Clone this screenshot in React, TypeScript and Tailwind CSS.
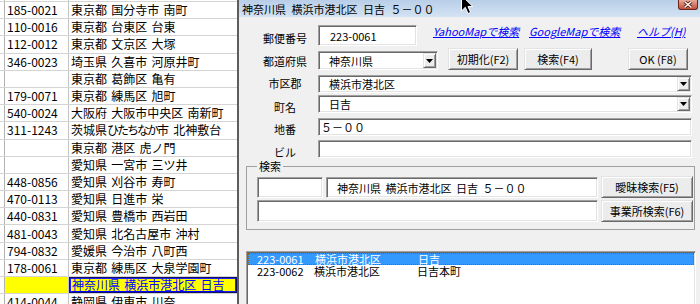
import React from "react";

const sunken =
  "bg-white border border-t-[#a0a0a0] border-l-[#a0a0a0] border-b-white border-r-white shadow-[inset_1px_1px_0_#696969,inset_-1px_-1px_0_#e3e3e3]";
const raised =
  "bg-[#ececec] border border-t-[#e3e3e3] border-l-[#e3e3e3] border-b-[#696969] border-r-[#696969] shadow-[inset_1px_1px_0_#ffffff,inset_-1px_-1px_0_#a0a0a0]";

type Row = { zip: string; addr: React.ReactNode; sel?: boolean };

const rows: Row[] = [
  { zip: "185-0021", addr: "東京都 国分寺市 南町" },
  { zip: "110-0016", addr: "東京都 台東区 台東" },
  { zip: "112-0012", addr: "東京都 文京区 大塚" },
  { zip: "346-0023", addr: "埼玉県 久喜市 河原井町" },
  { zip: "", addr: "東京都 葛飾区 亀有" },
  { zip: "179-0071", addr: "東京都 練馬区 旭町" },
  { zip: "540-0024", addr: "大阪府 大阪市中央区 南新町" },
  {
    zip: "311-1243",
    addr: (
      <>
        茨城県 <span className="tracking-[-2px]">ひたちなか</span>市 北神敷台
      </>
    ),
  },
  { zip: "", addr: "東京都 港区 虎ノ門" },
  { zip: "", addr: "愛知県 一宮市 三ツ井" },
  { zip: "448-0856", addr: "愛知県 刈谷市 寿町" },
  { zip: "470-0113", addr: "愛知県 日進市 栄" },
  { zip: "440-0831", addr: "愛知県 豊橋市 西岩田" },
  { zip: "481-0043", addr: "愛知県 北名古屋市 沖村" },
  { zip: "794-0832", addr: "愛媛県 今治市 八町西" },
  { zip: "178-0061", addr: "東京都 練馬区 大泉学園町" },
  { zip: "", addr: "神奈川県 横浜市港北区 日吉", sel: true },
  { zip: "414-0044", addr: "静岡県 伊東市 川奈" },
];

function Sheet() {
  return (
    <div className="w-[237px] h-[304px] shrink-0 overflow-hidden bg-white text-[12px] leading-[12px] [word-spacing:1.5px]">
      <div className="h-[2px] flex border-b border-[#d4d4d4]">
        <div className="w-[5px] shrink-0 border-r border-[#b4b4b4]" />
        <div className="w-[64px] shrink-0 border-r border-[#c4c4c4]" />
      </div>
      {rows.map((r, i) => (
        <div key={i} className="h-[17.2px] flex border-b border-[#d4d4d4]">
          <div className="w-[5px] shrink-0 border-r border-[#b4b4b4]" />
          {r.sel ? (
            <>
              <div className="w-[64px] shrink-0 border-r border-[#c4c4c4] bg-[#ffff00]" />
              <div className="flex-1 flex items-center pl-[3px] whitespace-nowrap bg-[#ffff00] text-[#0000ff] underline shadow-[inset_0_0_0_1px_#10106a,inset_0_0_0_2px_#2222ee]">
                {r.addr}
              </div>
            </>
          ) : (
            <>
              <div className="w-[64px] shrink-0 border-r border-[#c4c4c4] flex items-center pl-[2px] whitespace-nowrap">
                {r.zip}
              </div>
              <div className="flex-1 flex items-center pl-[2px] whitespace-nowrap">{r.addr}</div>
            </>
          )}
        </div>
      ))}
    </div>
  );
}

function Arrow() {
  return (
    <svg width="7" height="4" viewBox="0 0 7 4">
      <polygon points="0,0 7,0 3.5,4" fill="#000" />
    </svg>
  );
}

function Label({ children, cls }: { children: React.ReactNode; cls: string }) {
  return <div className={"w-[50px] ml-[21px] mr-[8px] shrink-0 text-center whitespace-nowrap " + cls}>{children}</div>;
}

function Btn({ children, cls }: { children: React.ReactNode; cls: string }) {
  return (
    <div className={raised + " shrink-0 flex items-center justify-center whitespace-nowrap text-[11px] " + cls}>
      {children}
    </div>
  );
}

function Combo({ text, cls }: { text: string; cls: string }) {
  return (
    <div className={sunken + " shrink-0 flex items-stretch p-[1px] " + cls}>
      <div className="flex-1 flex items-center pl-[9px] whitespace-nowrap">{text}</div>
      <div className={raised + " w-[13px] flex items-center justify-center"}>
        <Arrow />
      </div>
    </div>
  );
}

function Field({ text, cls }: { text: string; cls: string }) {
  return <div className={sunken + " shrink-0 flex items-center whitespace-nowrap " + cls}>{text}</div>;
}

function CloseBtn() {
  return (
    <div className="absolute right-[2px] top-0 w-[20px] h-[10px] rounded-b-[3px] border border-t-0 border-[#6b2318] bg-linear-to-b from-[#e9a898] to-[#c24e38] flex items-center justify-center">
      <svg width="10" height="7" viewBox="0 0 10 7">
        <path d="M1.5 0.5 L8.5 6.5 M8.5 0.5 L1.5 6.5" stroke="#5a1a10" strokeWidth="3" />
        <path d="M1.5 0.5 L8.5 6.5 M8.5 0.5 L1.5 6.5" stroke="#ffffff" strokeWidth="1.4" />
      </svg>
    </div>
  );
}

function Dialog() {
  return (
    <div className="flex-1 h-[304px] flex flex-col bg-[#f0f0f0] border-l-2 border-[#5d5d5d] text-[11px] leading-[12px] text-black">
      <div className="relative h-[17px] shrink-0 flex items-center pl-[3px] bg-linear-to-b from-[#b8cee8] to-[#d4e3f3] whitespace-nowrap [word-spacing:3px]">
        神奈川県 横浜市港北区 日吉 ５－００
        <CloseBtn />
      </div>
      <div className="flex flex-col pt-[8px]">
        {/* 郵便番号 */}
        <div className="flex items-start h-[21px]">
          <Label cls="mt-[7px]">郵便番号</Label>
          <Field text="223-0061" cls="w-[99px] h-[21px] pl-[11px]" />
          <div className="flex ml-[16px] text-[#0000ff] italic underline whitespace-nowrap">
            <div className="w-[96px]">YahooMapで検索</div>
            <div className="w-[108px]">GoogleMapで検索</div>
            <div>ヘルプ(H)</div>
          </div>
        </div>
        {/* 都道府県 */}
        <div className="flex items-start h-[22px] mt-[2px]">
          <Label cls="mt-[7px]">都道府県</Label>
          <Combo text="神奈川県" cls="w-[120px] h-[19px] mt-[3px]" />
          <Btn cls="ml-[10px] w-[70px] h-[22px]">初期化(F2)</Btn>
          <Btn cls="ml-[6px] w-[68px] h-[22px]">検索(F4)</Btn>
          <Btn cls="ml-[36px] w-[60px] h-[22px]">OK (F8)</Btn>
        </div>
        {/* 市区郡 */}
        <div className="flex items-start h-[18px] mt-[5px]">
          <Label cls="mt-[2px]">市区郡</Label>
          <Combo text="横浜市港北区" cls="w-[374px] h-[18px]" />
        </div>
        {/* 町名 */}
        <div className="flex items-start h-[18px] mt-[2px]">
          <Label cls="mt-[6px]">町名</Label>
          <Combo text="日吉" cls="w-[374px] h-[18px]" />
        </div>
        {/* 地番 */}
        <div className="flex items-start h-[18px] mt-[5px]">
          <Label cls="mt-[5px]">地番</Label>
          <Field text="５－００" cls="w-[374px] h-[18px] pl-[2px]" />
        </div>
        {/* ビル */}
        <div className="flex items-start h-[18px] mt-[4px]">
          <Label cls="mt-[6px]">ビル</Label>
          <Field text="" cls="w-[374px] h-[18px]" />
        </div>
        {/* 検索 group */}
        <fieldset className="ml-[7px] mt-[2px] w-[449px] border border-[#a0a0a0] pl-[10px] pt-[4px] pb-[7px]">
          <legend className="px-[2px] leading-[12px]">検索</legend>
          <div className="flex items-start h-[22px]">
            <Field text="" cls="w-[66px] h-[21px] mt-[1px]" />
            <Field text="神奈川県 横浜市港北区 日吉 ５－００" cls="ml-[3px] w-[272px] h-[21px] mt-[1px] pl-[10px] [word-spacing:2px]" />
            <Btn cls="ml-[3px] w-[92px] h-[22px]">曖昧検索(F5)</Btn>
          </div>
          <div className="flex items-start h-[22px] mt-[2px]">
            <Field text="" cls="w-[341px] h-[22px]" />
            <Btn cls="ml-[3px] w-[92px] h-[22px]">事業所検索(F6)</Btn>
          </div>
        </fieldset>
        {/* list */}
        <div className={sunken + " ml-[7px] mt-[21px] w-[450px] h-[60px] p-[1px] whitespace-nowrap"}>
          <div className="h-[12px] flex items-center bg-[#3399ff] text-white border border-dotted border-[#9a6010]">
            <div className="w-[66px] pl-[8px]">223-0061</div>
            <div className="w-[103px]">横浜市港北区</div>
            <div>日吉</div>
          </div>
          <div className="h-[12px] flex items-center">
            <div className="w-[66px] pl-[9px]">223-0062</div>
            <div className="w-[103px]">横浜市港北区</div>
            <div>日吉本町</div>
          </div>
        </div>
      </div>
    </div>
  );
}

function Cursor() {
  return (
    <svg className="absolute left-[461px] top-[-5px]" width="13" height="20" viewBox="0 0 13 20">
      <path d="M0.5 0.5 L0.5 16 L4.3 12.3 L7 18.5 L9.6 17.4 L7 11.5 L11.8 11.5 Z" fill="#000" stroke="#fff" strokeWidth="1" />
    </svg>
  );
}

export default function App() {
  return (
    <div className="relative w-[700px] h-[304px] overflow-hidden flex bg-white font-['Noto_Sans_CJK_JP',sans-serif] text-black">
      <Sheet />
      <Dialog />
      <Cursor />
    </div>
  );
}
